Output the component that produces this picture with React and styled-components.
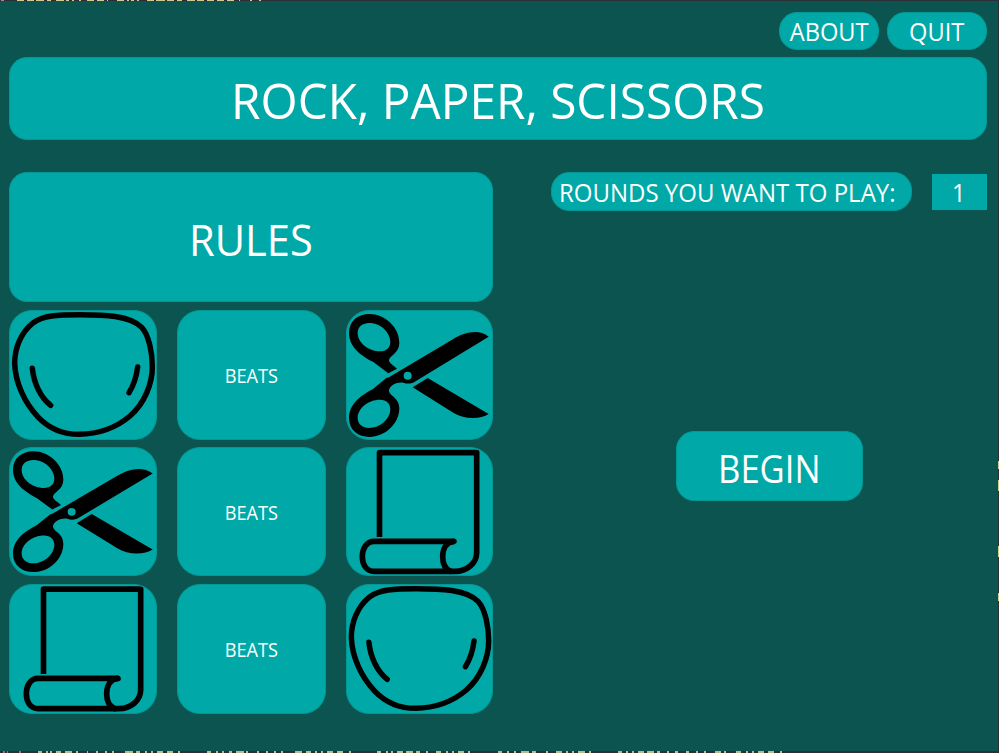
import React from "react";
import styled, { createGlobalStyle } from "styled-components";

const GlobalStyle = createGlobalStyle`
  * { box-sizing: border-box; }
  html, body { margin: 0; height: 100%; overflow: hidden; background: #2b3036; }
`;

const Desktop = styled.div`
  width: 999px;
  height: 753px;
  display: grid;
  grid-template-columns: 998px 1px;
  grid-template-rows: 1px 750px 2px;
  background: #2b3036;
  overflow: hidden;
`;

const EdgeStrip = styled.svg`
  display: block;
  width: 100%;
  height: 100%;
  grid-column: ${({ $side }) => ($side ? 2 : "1 / -1")};
  grid-row: ${({ $row }) => $row};
`;

const Window = styled.main`
  grid-column: 1;
  grid-row: 2;
  display: flex;
  flex-direction: column;
  padding: 11px 11px 0 9px;
  background: #0c5450;
  color: #fff;
  font-family: "Open Sans", "Noto Sans", sans-serif;
`;

const Panel = styled.div`
  display: flex;
  align-items: center;
  justify-content: center;
  overflow: hidden;
  border: 1px solid #049894;
  border-radius: 18px;
  background: #00a9a7;
  color: #fff;
`;

const Label = styled.span`
  flex: none;
  white-space: nowrap;
  line-height: 1;
  font-size: ${({ $size }) => $size}px;
  transform: translate(${({ $dx }) => $dx || 0}px, ${({ $dy }) => $dy || 0}px) scaleX(${({ $sx }) => $sx || 1});
`;

const TopBar = styled.nav`
  display: flex;
  justify-content: flex-end;
  gap: 8px;
  height: 38px;
`;

const MenuButton = styled(Panel).attrs({ as: "button" })`
  width: 100px;
  padding: 0;
  font-family: inherit;
`;

const Title = styled(Panel)`
  height: 83px;
  margin: 7px 0 32px;
`;

const Columns = styled.div`
  display: grid;
  grid-template-columns: 484px 436px;
  justify-content: space-between;
`;

const Rules = styled.section`
  display: grid;
  grid-template-rows: 130px 130px 129px 130px;
  row-gap: 8px;
`;

const RuleRow = styled.div`
  display: grid;
  grid-template-columns: 148px 149px 147px;
  column-gap: 20px;
  margin-top: ${({ $lift }) => -($lift || 0)}px;
  margin-bottom: ${({ $lift }) => $lift || 0}px;
`;

const Tile = styled(Panel)`
  border-radius: 23px;
`;

const Drawing = styled.svg`
  display: block;
  flex: none;
  width: calc(100% + 2px);
  height: calc(100% + 2px);
`;

const Setup = styled.section`
  display: flex;
  flex-direction: column;
`;

const RoundsRow = styled.div`
  display: flex;
  align-items: center;
  justify-content: space-between;
  height: 39px;
`;

const RoundsLabel = styled(Panel)`
  width: 361px;
  height: 39px;
`;

const RoundsInput = styled.div`
  display: flex;
  align-items: center;
  justify-content: center;
  width: 55px;
  height: 36px;
  background: #00a9a7;
`;

const BeginButton = styled(Panel).attrs({ as: "button" })`
  width: 187px;
  height: 70px;
  margin: 220px 0 0 125px;
  padding: 0;
  font-family: inherit;
`;

const Rock = ({ last }) => (
  <Drawing viewBox={last ? "28 30 442 390" : "27 30 444 390"} preserveAspectRatio="none" fill="none" stroke="#000" strokeWidth="16.500" strokeLinecap="round">
    <path d="M240 44C170 44 130 46 100 68C62 98 44 145 44 190C46 250 75 310 115 352C150 388 195 403 237 403C300 402 350 382 390 348C435 308 457 250 457 200C457 160 447 105 425 82C390 46 310 44 240 44Z" />
    <path d="M97 205C101 250 122 292 152 316M413 201Q407 247 387 278" />
  </Drawing>
);

const Scissors = ({ last }) => (
  <Drawing viewBox={last ? "18 30 441 390" : "15 29 444 394"} preserveAspectRatio="none" fill="#000" fillRule="evenodd">
    <path d="M145 220L100 186C60 165 27 140 27 98C27 62 55 42 88 42C135 42 178 82 178 128C178 160 150 165 147 180C147 190 160 195 171 206ZM53 99C53 128 85 154 120 154C140 154 151 142 151 125C150 95 120 69 88 69C68 69 53 80 53 99Z" />
    <path d="M148 231L340 117C370 98 415 85 446 110L228 243C215 253 200 252 190 248C165 245 147 260 147 272C148 288 178 292 178 325C178 371 135 411 88 411C55 411 27 391 27 355C27 313 60 288 98 268L138 235ZM53 354C53 325 85 299 120 299C140 299 151 311 151 328C150 358 120 384 88 384C68 384 53 373 53 354ZM191 227a12 12 0 1 0 24 0a12 12 0 1 0 -24 0Z" />
    <path d="M218 262L263 234L446 342C420 360 370 358 340 338Z" />
  </Drawing>
);

const Paper = ({ last }) => (
  <Drawing viewBox={last ? "18 21 441 387" : "15 23 444 387"} preserveAspectRatio="none" fill="none" stroke="#000" strokeWidth="17" strokeLinejoin="round">
    <path d="M118.500 291V38H410V338C410 370 380 394 345 394H102C80 394 67 375 67 350C67 325 80 304 102 304H342" />
    <path d="M342 304C320 306 308 325 308 350C308 372 318 388 332 394" strokeLinecap="round" />
  </Drawing>
);

const rules = [
  { Winner: Rock, Loser: Scissors, lift: 0 },
  { Winner: Scissors, Loser: Paper, lift: 1 },
  { Winner: Paper, Loser: Rock, lift: 1 },
];

const topMarks = [[17, 7], [27, 7], [36, 8], [47, 4], [56, 8], [66, 3], [72, 2], [79, 2], [87, 7], [97, 7], [107, 1], [117, 7], [127, 2], [131, 3], [137, 2], [147, 7], [156, 9], [167, 7], [177, 5], [187, 8], [197, 7], [207, 7], [217, 7], [227, 7], [239, 1], [250, 2], [259, 2]];
const bottomMarks = [[38, 4], [46, 2], [50, 2], [56, 5], [65, 7], [76, 2], [87, 1], [96, 2], [105, 2], [112, 2], [125, 8], [136, 4], [145, 2], [151, 2], [157, 6], [167, 6], [178, 2], [207, 4], [216, 2], [222, 2], [229, 3], [236, 8], [246, 2], [257, 2], [266, 2], [274, 2], [281, 2], [295, 7], [306, 5], [315, 2], [321, 2], [327, 6], [337, 6], [349, 2], [377, 4], [386, 2], [391, 2], [397, 6], [406, 7], [416, 4], [426, 2], [436, 5], [446, 2], [452, 2], [458, 6], [468, 2], [498, 4], [507, 2], [514, 2], [521, 8], [532, 4], [546, 2], [556, 6], [566, 2], [572, 2], [578, 7], [589, 2], [618, 4], [626, 2], [632, 2], [638, 6], [647, 7], [657, 3], [667, 2], [675, 3], [686, 3], [696, 2], [704, 2], [715, 6], [724, 2], [736, 5], [746, 2], [752, 2], [758, 6], [768, 6], [780, 2]];

export default function App() {
  return (
    <>
      <GlobalStyle />
      <Desktop>
        <EdgeStrip $row={1} viewBox="0 0 999 1" fill="#d3ca91" shapeRendering="crispEdges">
          {topMarks.map(([x, w]) => <rect key={x} x={x} width={w} height="1" />)}
          <rect x="1" width="3" height="1" fill="#b98091" />
        </EdgeStrip>
        <Window>
          <TopBar>
            <MenuButton><Label $size={25} $dx={0.5} $sx={0.945}>ABOUT</Label></MenuButton>
            <MenuButton><Label $size={25} $dx={-0.5} $sx={0.945}>QUIT</Label></MenuButton>
          </TopBar>
          <Title><Label $size={50} $dx={0.5} $dy={1} $sx={0.955}>ROCK, PAPER, SCISSORS</Label></Title>
          <Columns>
            <Rules>
              <Panel><Label $size={44} $dx={-0.5} $dy={2} $sx={0.945}>RULES</Label></Panel>
              {rules.map(({ Winner, Loser, lift }, i) => (
                <RuleRow key={i} $lift={lift}>
                  <Tile><Winner /></Tile>
                  <Tile><Label $size={20} $dy={1} $sx={0.91}>BEATS</Label></Tile>
                  <Tile><Loser last /></Tile>
                </RuleRow>
              ))}
            </Rules>
            <Setup>
              <RoundsRow>
                <RoundsLabel><Label $size={25} $dx={-4} $dy={1} $sx={0.96}>ROUNDS YOU WANT TO PLAY:</Label></RoundsLabel>
                <RoundsInput><Label $size={25} $dx={-0.5} $dy={1} $sx={0.945}>1</Label></RoundsInput>
              </RoundsRow>
              <BeginButton><Label $size={38} $dy={1.5} $sx={0.91}>BEGIN</Label></BeginButton>
            </Setup>
          </Columns>
        </Window>
        <EdgeStrip $side $row={2} viewBox="0 0 1 750" fill="#d3ca91" shapeRendering="crispEdges">
          <rect y="460" width="1" height="8" />
          <rect y="479" width="1" height="11" />
          <rect y="545" width="1" height="11" />
          <rect y="592" width="1" height="8" />
        </EdgeStrip>
        <EdgeStrip $row={3} viewBox="0 0 999 2" fill="#bcb98b" shapeRendering="crispEdges">
          {bottomMarks.map(([x, w]) => <rect key={x} x={x} width={w} height="2" />)}
          <path d="M3 0h2v2h-2zM7 0h1v2h-1zM19 0h2v2h-2z" fill="#c65f68" />
        </EdgeStrip>
      </Desktop>
    </>
  );
}
